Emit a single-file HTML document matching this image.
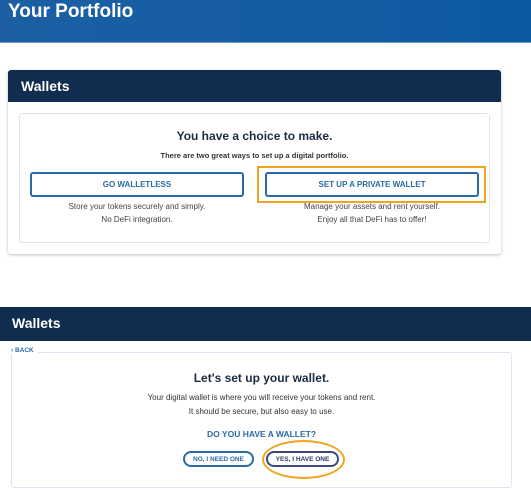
<!DOCTYPE html>
<html><head><style>
*{margin:0;padding:0;box-sizing:border-box}
body{width:531px;height:498px;background:#fff;font-family:"Liberation Sans",sans-serif;position:relative;overflow:hidden}
.a{position:absolute}
.c{text-align:center;white-space:nowrap}
.btn{position:absolute;border:2px solid #2a6aa8;border-radius:3px;color:#2a6aa8;font-weight:bold;font-size:8px;display:flex;align-items:center;justify-content:center}
.g{font-size:8px;color:#444}
</style></head><body>
<div class="a" style="left:0;top:0;width:531px;height:43px;background:linear-gradient(90deg,#1c5fa3,#0d5aa2);border-bottom:1px solid #6b9cc8"></div>
<div class="a" style="left:8px;top:1px;color:#fff;font-size:19px;font-weight:bold">Your Portfolio</div>

<div class="a" style="left:8px;top:70px;width:493px;height:184px;background:#fff;border-radius:3px;box-shadow:0 1px 3px rgba(0,0,0,.25)"></div>
<div class="a" style="left:8px;top:70px;width:493px;height:32px;background:#102c4e;border-radius:3px 3px 0 0"></div>
<div class="a" style="left:21px;top:78px;color:#fff;font-size:14px;font-weight:bold">Wallets</div>
<div class="a" style="left:19px;top:113px;width:471px;height:130px;border:1px solid #dde6f0;border-radius:3px"></div>
<div class="a c" style="left:19px;width:471px;top:129px;font-size:12px;font-weight:bold;color:#1d2b45">You have a choice to make.</div>
<div class="a c" style="left:19px;width:471px;top:151px;font-size:7.5px;color:#333;font-weight:bold">There are two great ways to set up a digital portfolio.</div>
<div class="btn" style="left:30px;top:172px;width:214px;height:25px">GO WALLETLESS</div>
<div class="btn" style="left:265px;top:172px;width:214px;height:25px">SET UP A PRIVATE WALLET</div>
<div class="a" style="left:257px;top:166px;width:229px;height:37px;border:2px solid #f1a51f"></div>
<div class="a c g" style="left:30px;width:214px;top:202px">Store your tokens securely and simply.</div>
<div class="a c g" style="left:30px;width:214px;top:215px">No DeFi integration.</div>
<div class="a c g" style="left:265px;width:214px;top:202px">Manage your assets and rent yourself.</div>
<div class="a c g" style="left:265px;width:214px;top:215px">Enjoy all that DeFi has to offer!</div>

<div class="a" style="left:0;top:307px;width:531px;height:34px;background:#102c4e"></div>
<div class="a" style="left:12px;top:315px;color:#fff;font-size:14px;font-weight:bold">Wallets</div>
<div class="a" style="left:11px;top:352px;width:501px;height:136px;border:1px solid #dde6f0;border-radius:3px"></div>
<div class="a" style="left:11px;top:347px;background:#fff;padding-right:4px;font-size:6.5px;font-weight:bold;color:#2a6aa8">‹ BACK</div>
<div class="a c" style="left:11px;width:501px;top:371px;font-size:12px;font-weight:bold;color:#1d2b45">Let's set up your wallet.</div>
<div class="a c g" style="left:11px;width:501px;top:393px;color:#333">Your digital wallet is where you will receive your tokens and rent.</div>
<div class="a c g" style="left:11px;width:501px;top:407px;color:#333">It should be secure, but also easy to use.</div>
<div class="a c" style="left:11px;width:501px;top:429px;font-size:8.5px;font-weight:bold;color:#2a6aa8">DO YOU HAVE A WALLET?</div>
<div class="btn" style="left:183px;top:451px;width:71px;height:16px;border-radius:9px;font-size:6.5px">NO, I NEED ONE</div>
<div class="btn" style="left:266px;top:451px;width:73px;height:16px;border-radius:9px;font-size:6.5px;border-color:#3b4a78;color:#2b3a68">YES, I HAVE ONE</div>
<div class="a" style="left:262px;top:440px;width:83px;height:39px;border:2px solid #f1a51f;border-radius:50%"></div>
</body></html>
